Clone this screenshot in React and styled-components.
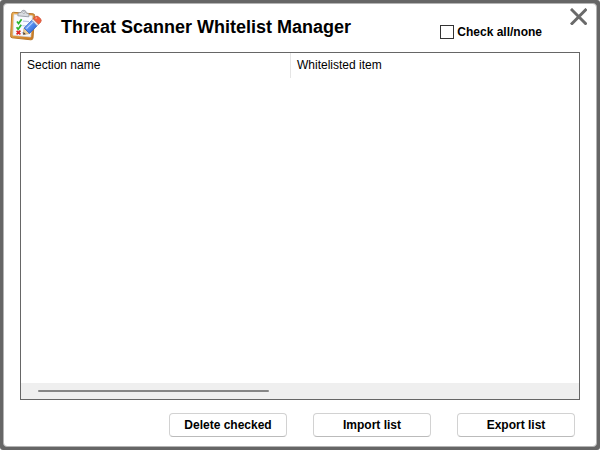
import React, { useState } from 'react';
import styled, { createGlobalStyle } from 'styled-components';

const GlobalStyle = createGlobalStyle`
  * {
    box-sizing: border-box;
  }

  body {
    margin: 0;
    background: #fff;
    color: #000;
    font-family: 'Liberation Sans', Arial, sans-serif;
    font-size: 12px;
  }
`;

const Frame = styled.div`
  min-height: 100vh;
  padding: 3px;
  background: #666;
  border-radius: 3px;
  display: flex;
`;

const Dialog = styled.main`
  flex: 1;
  min-width: 0;
  display: flex;
  flex-direction: column;
  background: #fff;
  border: 1px solid #b4b4b4;
  border-radius: 4px;
`;

const Header = styled.header`
  display: flex;
  align-items: flex-start;
  height: 48px;
  padding: 4px 9px 0 5px;
`;

const Title = styled.h1`
  flex: 1;
  margin: 8px 0 0 19px;
  font-size: 18px;
  line-height: 22px;
  font-weight: bold;
  white-space: nowrap;
`;

const CheckLabel = styled.label`
  display: flex;
  align-items: center;
  gap: 3px;
  margin: 17px 28px 0 0;
  line-height: 14px;
  font-weight: bold;
`;

const Checkbox = styled.input`
  appearance: none;
  width: 14px;
  height: 14px;
  margin: 0;
  background: #fff;
  border: 1px solid #333;

  &:checked {
    background: #333;
    box-shadow: inset 0 0 0 2px #fff;
  }
`;

const CloseButton = styled.button`
  display: flex;
  margin: 0;
  padding: 0;
  border: 0;
  background: none;
  color: #6a6a6a;
`;

const ListBox = styled.section`
  flex: 1;
  display: flex;
  flex-direction: column;
  margin: 0 16px;
  border: 1px solid #666;
`;

const ListBody = styled.div`
  flex: 1;
`;

const Table = styled.table`
  width: 100%;
  table-layout: fixed;
  border-collapse: separate;
  border-spacing: 0;
`;

const HeaderCell = styled.th`
  width: ${({ $width }) => $width || 'auto'};
  height: 25px;
  padding: 0 6px;
  border-right: ${({ $divider }) => ($divider ? '1px solid #e5e5e5' : '0')};
  font-weight: normal;
  line-height: 15px;
  text-align: left;
`;

const ScrollTrack = styled.div`
  display: flex;
  align-items: center;
  height: 16px;
  padding: 0 17px;
  background: #efefef;
`;

const ScrollThumb = styled.div`
  width: 44%;
  height: 2px;
  border-radius: 1px;
  background: #868686;
`;

const Footer = styled.footer`
  display: flex;
  justify-content: flex-end;
  gap: 26px;
  padding: 13px 21px 9px;
`;

const Button = styled.button`
  width: 118px;
  height: 24px;
  padding: 0;
  background: #fff;
  border: 1px solid #d2d2d2;
  border-bottom-color: #bbb;
  border-radius: 4px;
  color: #000;
  font: bold 12px/14px 'Liberation Sans', Arial, sans-serif;
`;

const ClipboardIcon = () => (
  <svg width="33" height="33" viewBox="0 0 33 33" aria-hidden="true">
    <defs>
      <linearGradient id="board" x1="0" y1="0" x2="1" y2="1">
        <stop offset="0" stopColor="#f3b75c" />
        <stop offset="1" stopColor="#c9761c" />
      </linearGradient>
      <linearGradient id="pencil" x1="0" y1="0" x2="1" y2="1">
        <stop offset="0" stopColor="#8fbcff" />
        <stop offset=".55" stopColor="#4a84ea" />
        <stop offset="1" stopColor="#2152bd" />
      </linearGradient>
    </defs>
    <path
      d="M4.5 4.3 L24 5.8 Q25.8 6 25.7 7.8 L24 30 Q23.8 32 21.8 31.8 L3.2 29.8 Q1.4 29.6 1.6 27.8 L2.8 5.8 Q3 4.2 4.5 4.3Z"
      fill="url(#board)"
      stroke="#b8792e"
      strokeWidth="1"
    />
    <path d="M5 6.4 L23.4 7.8 L21.7 29 L4 27.2Z" fill="#f8faff" stroke="#d3d9e5" strokeWidth=".7" />
    <path d="M8.8 7.8 L9.2 5 L12.2 4.4 Q12.6 2 15 2.2 Q17.2 2.4 17.2 5 L20 5.8 L19.8 8.8Z" fill="#d9dde2" stroke="#8c929b" strokeWidth=".8" />
    <circle cx="14.8" cy="4.6" r="1" fill="#fff" stroke="#7d838b" strokeWidth=".5" />
    <path d="M14 13.2 L20 13.7 M13.5 17.6 L17 18 M12.8 24.6 L14.4 24.8" stroke="#b9c4e5" strokeWidth="1.2" />
    <path d="M8 13.4 L9.6 15.6 L12.6 11.2 M7.6 19.2 L9.2 21.2 L12.2 16.8" fill="none" stroke="#29b52c" strokeWidth="1.7" />
    <path d="M7.6 22.8 L11.4 26.4 M11.4 22.6 L7.6 26.4" stroke="#dc2424" strokeWidth="1.7" />
    <path d="M14.2 26.6 L15.1 20.1 L20.5 25.5Z" fill="#f0cf96" stroke="#b78b55" strokeWidth=".6" />
    <path d="M14.2 26.6 L14.6 24 L16.8 26.2Z" fill="#333" />
    <path d="M15.1 20.1 L22.8 12.3 L28.2 17.7 L20.5 25.5Z" fill="url(#pencil)" stroke="#3464bd" strokeWidth=".8" />
    <path d="M17.4 20.6 L24.2 13.9" stroke="#b4d0ff" strokeWidth="1.3" />
    <path d="M22.8 12.3 L24.2 10.8 L29.6 16.2 L28.2 17.7Z" fill="#e5eaf2" stroke="#8da2c8" strokeWidth=".6" />
    <path d="M24.2 10.8 L26.2 8.8 Q28 7.4 29.7 8.9 L31.6 10.8 Q33 12.6 31.6 14.2 L29.6 16.2Z" fill="#f0613f" stroke="#c9503a" strokeWidth=".7" />
    <path d="M26.6 10.4 L27.8 9.4" stroke="#ffab91" strokeWidth="1.3" />
  </svg>
);

const CloseIcon = () => (
  <svg width="17" height="17" viewBox="0 0 17 17" aria-hidden="true">
    <path d="M2 2 L15.5 15.5 M15.5 2 L2 15.5" stroke="currentColor" strokeWidth="3" strokeLinecap="square" />
  </svg>
);

const App = () => {
  const [checked, setChecked] = useState(false);

  return (
    <>
      <GlobalStyle />
      <Frame>
        <Dialog>
          <Header>
            <ClipboardIcon />
            <Title>Threat Scanner Whitelist Manager</Title>
            <CheckLabel>
              <Checkbox type="checkbox" checked={checked} onChange={(e) => setChecked(e.target.checked)} />
              Check all/none
            </CheckLabel>
            <CloseButton type="button" aria-label="Close">
              <CloseIcon />
            </CloseButton>
          </Header>

          <ListBox>
            <ListBody>
              <Table>
                <thead>
                  <tr>
                    <HeaderCell $width="270px" $divider>
                      Section name
                    </HeaderCell>
                    <HeaderCell>Whitelisted item</HeaderCell>
                  </tr>
                </thead>
              </Table>
            </ListBody>
            <ScrollTrack>
              <ScrollThumb />
            </ScrollTrack>
          </ListBox>

          <Footer>
            <Button type="button">Delete checked</Button>
            <Button type="button">Import list</Button>
            <Button type="button">Export list</Button>
          </Footer>
        </Dialog>
      </Frame>
    </>
  );
};

export default App;
